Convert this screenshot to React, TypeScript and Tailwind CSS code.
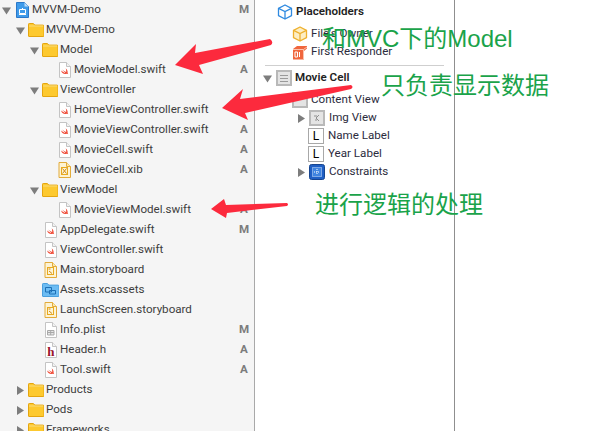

type IconKind = 'project' | 'folder' | 'swift' | 'xib' | 'board' | 'assets' | 'plist' | 'header'

function Triangle({ open }: { open?: boolean }) {
  return (
    <svg width="9" height="9" viewBox="0 0 9 9" className="shrink-0">
      {open ? <path d="M0 1.5h9L4.5 8.5z" fill="#7d7d7d" /> : <path d="M1 0v9l7-4.5z" fill="#7d7d7d" />}
    </svg>
  )
}

function Page({ children }: { children?: React.ReactNode }) {
  return (
    <svg width="13" height="16" viewBox="0 0 13 16" className="shrink-0">
      <path d="M1.500.5h7l4 4v11h-11z" fill="#fff" stroke="#c4c4c4" />
      <path d="M8.500.5v4h4" fill="#f2f2f2" stroke="#c4c4c4" />
      {children}
    </svg>
  )
}

function FileIcon({ kind }: { kind: IconKind }) {
  if (kind === 'folder') {
    return (
      <svg width="16" height="14" viewBox="0 0 16 14" className="shrink-0">
        <path d="M.5 13V1.200q0-.7.7-.7h4.200l1.400 1.600h8q1.200 0 1.200 1V13q0 .5-.5.5H1q-.5 0-.5-.5z" fill="#fdc92f" stroke="#e5a50f" />
        <path d="M1 3h14" stroke="#f9dc7e" />
      </svg>
    )
  }
  if (kind === 'project') {
    return (
      <svg width="13" height="16" viewBox="0 0 13 16" className="shrink-0">
        <path d="M.5.5h8l4 4v11H.5z" fill="#3f9bea" stroke="#2b78c9" />
        <path d="M8.500.5v4h4z" fill="#bcdcf7" />
        <path d="M3.500 7.500h6v4h-6z" fill="none" stroke="#fff" />
        <path d="M3 12.500h7M6.500 6v2" stroke="#fff" />
      </svg>
    )
  }
  if (kind === 'assets') {
    return (
      <svg width="17" height="14" viewBox="0 0 17 14" className="shrink-0">
        <path d="M.5 13V1.200q0-.7.7-.7h4.200l1.400 1.600h9.200q1 0 1 1V13q0 .5-.5.5H1q-.5 0-.5-.5z" fill="#6cbcf3" stroke="#4a9fdd" />
        <path d="M3.500 4.500h6v4.500h-6zM7.500 7.500h6v3.500h-6z" fill="none" stroke="#1d6fb5" />
      </svg>
    )
  }
  if (kind === 'swift') {
    return (
      <Page>
        <path d="M3 8.500c2 1.600 3.600 2.400 4.600 2.700C6 9.700 4.800 8.300 4.300 7.500c1.500 1.300 3.200 2.300 4.100 2.700-.6-1.200.2-2.600-.8-4 1.600 1.300 2.300 3.300 2 4.600.4.500.6 1 .5 1.400-.5-.6-1.100-.6-1.600-.4-1.500.6-4.300.3-5.500-3.300z" fill="#ef4530" />
      </Page>
    )
  }
  if (kind === 'xib' || kind === 'board') {
    return (
      <svg width="13" height="16" viewBox="0 0 13 16" className="shrink-0">
        <path d="M1 .5h7.500l4 4v11H1z" fill="#fdf3d4" stroke="#e2ab3a" />
        <path d="M8.500.5v4h4" fill="#fbe7ae" stroke="#e2ab3a" />
        <rect x="3.500" y="5.500" width="6" height="7" fill="none" stroke="#e8a91f" />
        <path d={kind === 'xib' ? 'M4.500 6.500l4 5M8.500 6.500l-4 5' : 'M4.500 7h2M5 9l3 2.500'} stroke="#d08a12" />
      </svg>
    )
  }
  if (kind === 'plist') {
    return (
      <Page>
        <path d="M3.500 8.500h6.500v4.500H3.500zM3.500 10.500h6.500M6.700 8.500v4.500" fill="#e6e6e6" stroke="#a8a8a8" />
      </Page>
    )
  }
  return (
    <Page>
      <text x="6.800" y="13.500" textAnchor="middle" fontFamily="'Liberation Serif', serif" fontWeight="700" fontSize="13" fill="#99122b">h</text>
    </Page>
  )
}

const rows: { name: string; kind: IconKind; depth: number; open?: boolean; closed?: boolean; badge?: string }[] = [
  { name: 'MVVM-Demo', kind: 'project', depth: 0, open: true, badge: 'M' },
  { name: 'MVVM-Demo', kind: 'folder', depth: 1, open: true },
  { name: 'Model', kind: 'folder', depth: 2, open: true },
  { name: 'MovieModel.swift', kind: 'swift', depth: 3, badge: 'A' },
  { name: 'ViewController', kind: 'folder', depth: 2, open: true },
  { name: 'HomeViewController.swift', kind: 'swift', depth: 3 },
  { name: 'MovieViewController.swift', kind: 'swift', depth: 3, badge: 'A' },
  { name: 'MovieCell.swift', kind: 'swift', depth: 3, badge: 'A' },
  { name: 'MovieCell.xib', kind: 'xib', depth: 3, badge: 'A' },
  { name: 'ViewModel', kind: 'folder', depth: 2, open: true },
  { name: 'MovieViewModel.swift', kind: 'swift', depth: 3, badge: 'A' },
  { name: 'AppDelegate.swift', kind: 'swift', depth: 2, badge: 'M' },
  { name: 'ViewController.swift', kind: 'swift', depth: 2 },
  { name: 'Main.storyboard', kind: 'board', depth: 2 },
  { name: 'Assets.xcassets', kind: 'assets', depth: 2 },
  { name: 'LaunchScreen.storyboard', kind: 'board', depth: 2 },
  { name: 'Info.plist', kind: 'plist', depth: 2, badge: 'M' },
  { name: 'Header.h', kind: 'header', depth: 2, badge: 'A' },
  { name: 'Tool.swift', kind: 'swift', depth: 2, badge: 'A' },
  { name: 'Products', kind: 'folder', depth: 1, closed: true },
  { name: 'Pods', kind: 'folder', depth: 1, closed: true },
  { name: 'Frameworks', kind: 'folder', depth: 1, closed: true },
]

const depthPad = ['pl-[2px]', 'pl-[16px]', 'pl-[30px]', 'pl-[44px]']

function Sidebar() {
  return (
    <div className="w-[255px] h-full shrink-0 overflow-hidden bg-[#f5f5f5] border-r border-[#a9a9a9]">
      {rows.map((r, i) => (
        <div key={i} className={`flex items-center h-5 relative ${depthPad[r.depth]}`}>
          <span className="w-[13px] shrink-0 flex">
            {(r.open || r.closed) && <Triangle open={r.open} />}
          </span>
          <span className="w-[14px] shrink-0 flex justify-center">
            <FileIcon kind={r.kind} />
          </span>
          <span className="ml-[3px] text-[#3d3d3d] whitespace-nowrap">{r.name}</span>
          {r.badge && (
            <span className="absolute right-[5px] w-[10px] text-center font-bold text-[#7c7c7c]">{r.badge}</span>
          )}
        </div>
      ))}
    </div>
  )
}

function CubeIcon({ stroke, fill }: { stroke: string; fill: string }) {
  return (
    <svg width="16" height="16" viewBox="0 0 16 16" className="shrink-0">
      <path d="M8 1l6.500 3.300v7.400L8 15l-6.500-3.300V4.300z" fill={fill} stroke={stroke} strokeWidth="1.300" strokeLinejoin="round" />
      <path d="M1.500 4.300L8 7.600l6.500-3.300M8 7.600V15" fill="none" stroke={stroke} strokeWidth="1.300" />
    </svg>
  )
}

function Responder() {
  return (
    <svg width="16" height="15" viewBox="0 0 16 15" className="shrink-0">
      <path d="M1 4l4-3h10v2.500L12 6v8.500H1z" fill="#f0663d" />
      <path d="M1 4.500h10.500L15 2" fill="none" stroke="#fbc3ad" />
      <path d="M11.500 4.500v10" stroke="#fbc3ad" />
      <path d="M3 7h2.500v5H3zM7.500 7v5" fill="none" stroke="#fff" />
    </svg>
  )
}

function GrayBox({ children }: { children?: React.ReactNode }) {
  return (
    <span className="w-4 h-4 shrink-0 border-2 border-[#b9b9b9] bg-[#e4e4e4] flex items-center justify-center">
      {children}
    </span>
  )
}

function LabelBox() {
  return (
    <span className="w-4 h-4 shrink-0 border border-[#a8a8a8] bg-white flex items-center justify-center text-black text-[12px] leading-none">
      L
    </span>
  )
}

function Outline() {
  return (
    <div className="w-[200px] h-full shrink-0 border-r border-[#8f8f8f] bg-white text-[#2b2b3d]">
      <div className="flex items-center h-[16px] mt-1 ml-[22px] gap-[3px] font-semibold text-[#222]">
        <CubeIcon stroke="#2f8ae0" fill="#fff" />
        Placeholders
      </div>
      <div className="flex items-center h-[18px] mt-[5px] ml-[37px] gap-[3px]">
        <CubeIcon stroke="#eeb02e" fill="#fdeec4" />
        File's Owner
      </div>
      <div className="flex items-center h-[18px] ml-[37px] gap-[3px]">
        <Responder />
        First Responder
      </div>
      <div className="h-px w-[179px] bg-[#cfcfcf] ml-[10px] mt-[4px]" />
      <div className="flex items-center h-[18px] mt-[3px] ml-[8px] font-semibold text-[#222]">
        <Triangle open />
        <span className="ml-[4px] mr-[3px] flex">
          <GrayBox>
            <span className="w-2 h-[7px] border-y border-[#9a9a9a] bg-[linear-gradient(#9a9a9a,#9a9a9a)] bg-[length:100%_1px] bg-center bg-no-repeat" />
          </GrayBox>
        </span>
        Movie Cell
      </div>
      <div className="flex items-center h-[18px] mt-[4px] ml-[37px] gap-[3px]">
        <GrayBox />
        Content View
      </div>
      <div className="flex items-center h-[18px] ml-[42px]">
        <Triangle />
        <span className="ml-[3px] mr-[4px] flex">
          <GrayBox>
            <svg width="8" height="8" viewBox="0 0 8 8"><path d="M1 2h3M6 1L3 4l3 3M2 6h2" stroke="#8f8f8f" fill="none" /></svg>
          </GrayBox>
        </span>
        Img View
      </div>
      <div className="flex items-center h-[18px] ml-[53px] gap-[4px]">
        <LabelBox />
        Name Label
      </div>
      <div className="flex items-center h-[18px] ml-[53px] gap-[4px]">
        <LabelBox />
        Year Label
      </div>
      <div className="flex items-center h-[18px] ml-[42px]">
        <Triangle />
        <span className="ml-[3px] mr-[4px] flex">
          <svg width="16" height="16" viewBox="0 0 16 16">
            <rect x=".5" y=".5" width="15" height="15" rx="2" fill="#1f5fc4" stroke="#17458f" />
            <rect x="3.500" y="3.500" width="9" height="9" fill="#3f84e0" stroke="#cfe2fb" strokeDasharray="1 1" />
            <path d="M8 5v6M5 8h6" stroke="#fff" strokeDasharray="1 1" />
          </svg>
        </span>
        Constraints
      </div>
    </div>
  )
}

// the red arrows and green captions were painted over the screenshot
function Annotations() {
  return (
    <>
      <svg width="610" height="431" viewBox="0 0 610 431" className="absolute left-0 top-0 pointer-events-none">
        <g fill="#fc2a3d">
          <path d="M175 65L196 44L195 53L270 39Q274 42 271 45L199 65L203 74z" />
          <path d="M222 108L243 89L240 99L351 85Q354 87 351 89L245 113L248 120z" />
          <path d="M211 209L224 199L226 205L287 203Q289 204.500 287 206L227 213L226 218z" />
        </g>
      </svg>
      <div className="absolute left-[322px] top-[25px] text-[24px] leading-[28px] text-[#1aa34a] whitespace-nowrap font-['Liberation_Sans','Noto_Sans_CJK_SC',sans-serif]">和MVC下的Model</div>
      <div className="absolute left-[381px] top-[70px] text-[24px] leading-[28px] text-[#1aa34a] whitespace-nowrap font-['Noto_Sans_CJK_SC',sans-serif]">只负责显示数据</div>
      <div className="absolute left-[315px] top-[189px] text-[24px] leading-[28px] text-[#1aa34a] whitespace-nowrap font-['Noto_Sans_CJK_SC',sans-serif]">进行逻辑的处理</div>
    </>
  )
}

export default function App() {
  return (
    <div className="relative w-[610px] h-[431px] overflow-hidden bg-white flex text-[11.6px] font-['Roboto',sans-serif]">
      <Sidebar />
      <Outline />
      <Annotations />
    </div>
  )
}
